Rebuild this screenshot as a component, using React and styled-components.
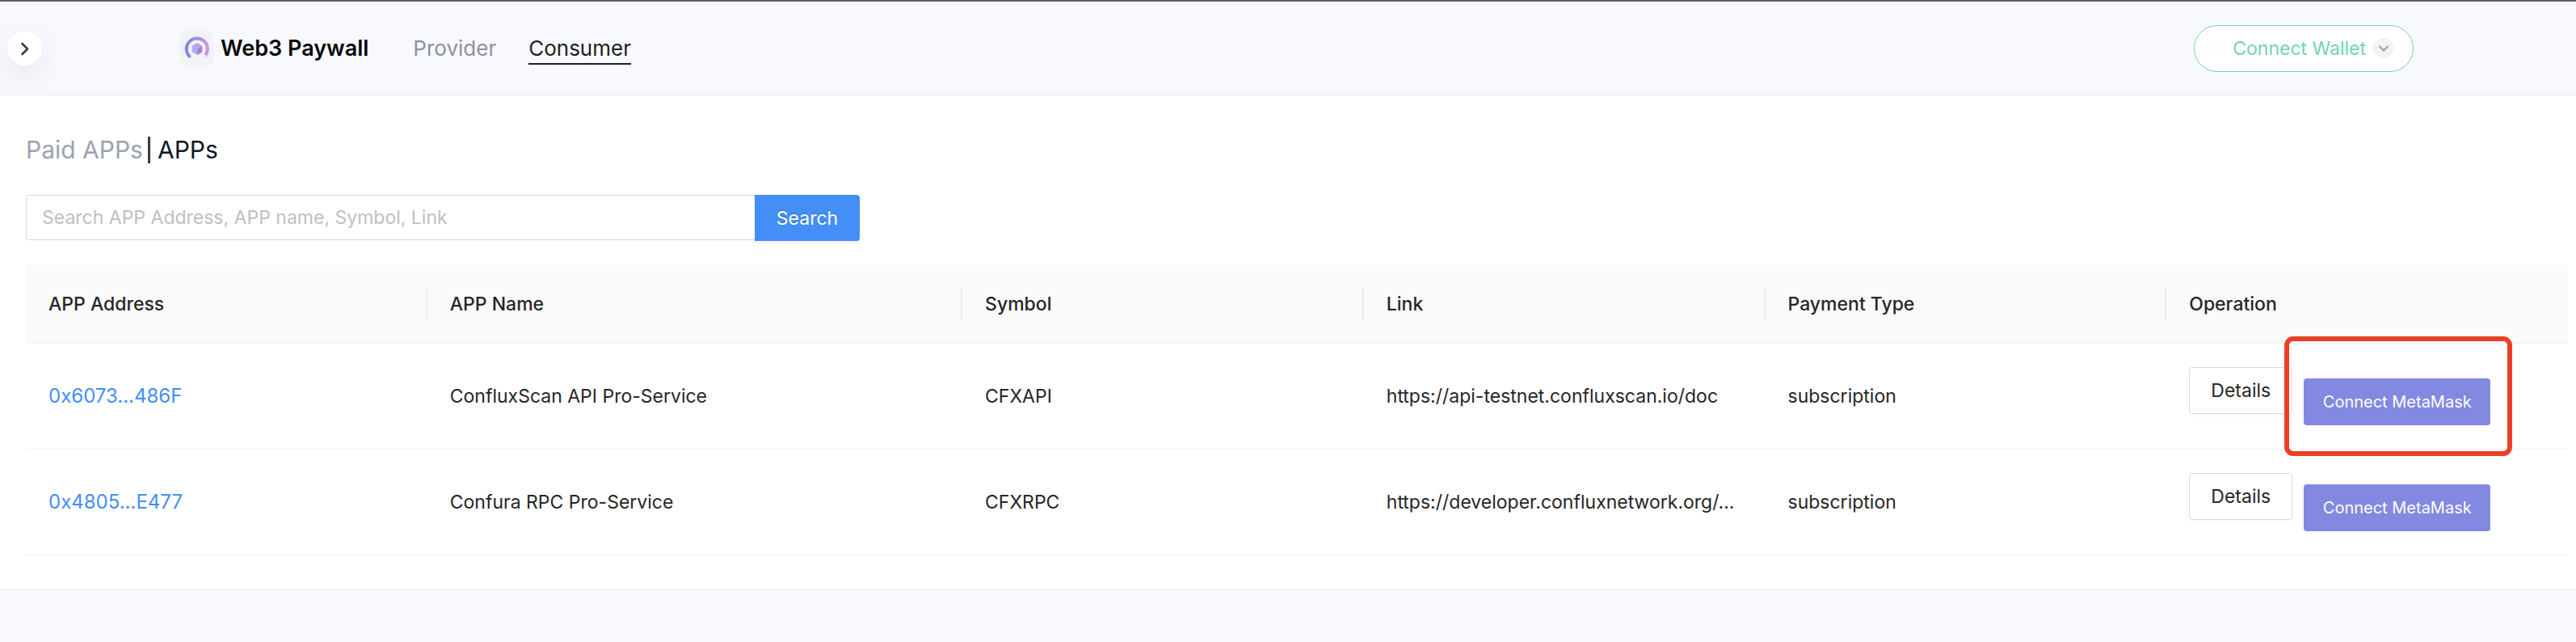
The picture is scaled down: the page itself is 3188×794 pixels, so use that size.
import React from "react";
import styled, { createGlobalStyle } from "styled-components";

const GlobalStyle = createGlobalStyle`
  *, *::before, *::after { box-sizing: border-box; }
  body {
    margin: 0;
    background: #f8f9fe;
    color: #262626;
    font-family: Inter, "Liberation Sans", sans-serif;
    font-size: 23px;
    line-height: 36px;
  }
  button, input { font: inherit; }
  button { cursor: pointer; }
  a { text-decoration: none; }
`;

const Page = styled.div`
  border-top: 2px solid #5f5f64;
`;

const Header = styled.header`
  display: flex;
  align-items: center;
  height: 116px;
  padding-left: 9px;
  border-bottom: 1px solid #ececf0;
`;

const SidebarToggle = styled.button`
  display: grid;
  place-items: center;
  flex: none;
  width: 43px;
  height: 43px;
  padding: 0;
  border: 0;
  border-radius: 50%;
  background: #fff;
  color: #3c3b4b;
  box-shadow: 0 12px 36px rgba(20, 20, 40, 0.08);
`;

const HeaderInner = styled.div`
  display: flex;
  align-items: center;
  flex: 1;
  margin: 0 201px 0 170px;
`;

const Brand = styled.a`
  display: flex;
  align-items: center;
  gap: 8px;
  margin-right: 55px;
  color: #050505;
  font-size: 27px;
  font-weight: 600;
`;

const MainNav = styled.nav`
  display: flex;
  gap: 40px;
  font-size: 26px;
`;

const NavLink = styled.a`
  border-top: 2px solid transparent;
  border-bottom: 2px solid ${(p) => (p.$active ? "#1f1f1f" : "transparent")};
  color: ${(p) => (p.$active ? "#1f1f1f" : "#8f90a0")};
`;

const WalletButton = styled.button`
  display: flex;
  align-items: center;
  height: 58px;
  margin-left: auto;
  padding: 0 24px 0 23px;
  border: 1px solid #6dd3b4;
  border-radius: 29px;
  background: #fff;
  color: #6fd5b5;
`;

const StatusDot = styled.span`
  width: 18px;
  height: 18px;
  margin-right: 6px;
  border-radius: 50%;
  background: #fdfdfd;
`;

const WalletArrow = styled.span`
  display: grid;
  place-items: center;
  width: 25px;
  height: 25px;
  margin-left: 9px;
  border-radius: 50%;
  background: #f3f3f4;
  color: #a2a2a8;
`;

const Content = styled.main`
  padding: 51px 10px 42px 32px;
  border-bottom: 1px solid #ececf0;
  background: #fff;
`;

const Crumbs = styled.nav`
  display: flex;
  margin-bottom: 39px;
  font-size: 30px;
  line-height: 33px;
`;

const CrumbLink = styled.a`
  padding-right: 6px;
  color: #9ca3af;
`;

const CrumbCurrent = styled.span`
  padding-left: 9px;
  border-left: 3px solid #3a3a3a;
  color: #111827;
`;

const SearchForm = styled.form`
  display: flex;
  align-items: flex-start;
  max-width: 1032px;
  margin-bottom: 29px;
`;

const SearchInput = styled.input`
  flex: 1;
  min-width: 0;
  height: 56px;
  padding: 0 19px;
  border: 1px solid #d9d9d9;
  border-right: 0;
  border-radius: 4px 0 0 4px;
  background: #fff;
  color: #262626;
  outline: none;
  &::placeholder { color: #bfbfbf; opacity: 1; }
`;

const SearchButton = styled.button`
  width: 130px;
  height: 57px;
  padding: 0;
  border: 0;
  border-radius: 0 4px 4px 0;
  background: #448ef7;
  color: #fff;
  text-shadow: 0 -2px 0 rgba(0, 0, 0, 0.12);
  box-shadow: 0 4px 0 rgba(0, 0, 0, 0.04);
`;

const AppTable = styled.table`
  width: 100%;
  table-layout: fixed;
  border-collapse: separate;
  border-spacing: 0;
`;

const Col = styled.col`
  width: calc(100% * ${(p) => p.$share} / 19);
`;

const HeadCell = styled.th`
  position: relative;
  height: 98px;
  padding: 0 28px;
  border-bottom: 1px solid #f0f0f0;
  background: #fafafa;
  font-weight: 500;
  text-align: left;
  &:first-child { border-top-left-radius: 4px; }
  &:last-child { border-top-right-radius: 4px; }
  &:not(:last-child)::after {
    content: "";
    position: absolute;
    top: 29px;
    right: 0;
    width: 2px;
    height: 40px;
    background: #ececec;
  }
`;

const Cell = styled.td`
  padding: 29px 28px;
  border-bottom: 1px solid #f0f0f0;
  white-space: nowrap;
`;

const AddressLink = styled.a`
  color: #448ef7;
  font-size: 24px;
`;

const Actions = styled.div`
  display: flex;
  align-items: flex-start;
  gap: 14px;
`;

const DetailsButton = styled.button`
  width: 128px;
  height: 58px;
  padding: 0;
  border: 1px solid #d9d9d9;
  border-radius: 4px;
  background: #fff;
  color: #262626;
  box-shadow: 0 4px 0 rgba(0, 0, 0, 0.016);
`;

const ConnectSlot = styled.div`
  position: relative;
  margin-top: 14px;
`;

const ConnectButton = styled.button`
  display: block;
  width: 231px;
  height: 58px;
  padding: 0;
  border: 0;
  border-radius: 4px;
  background: #8389e1;
  color: #fff;
  font-size: 20px;
`;

const Highlight = styled.div`
  position: absolute;
  z-index: 1;
  inset: -52px -27px -38px -24px;
  border: 6px solid #eb4025;
  border-radius: 11px;
  pointer-events: none;
`;

const columns = [
  { title: "APP Address", share: 3 },
  { title: "APP Name", share: 4 },
  { title: "Symbol", share: 3 },
  { title: "Link", share: 3 },
  { title: "Payment Type", share: 3 },
  { title: "Operation", share: 3 },
];

const apps = [
  {
    address: "0x6073...486F",
    name: "ConfluxScan API Pro-Service",
    symbol: "CFXAPI",
    link: "https://api-testnet.confluxscan.io/doc",
    payment: "subscription",
    highlighted: true,
  },
  {
    address: "0x4805...E477",
    name: "Confura RPC Pro-Service",
    symbol: "CFXRPC",
    link: "https://developer.confluxnetwork.org/...",
    payment: "subscription",
  },
];

function Logo() {
  return (
    <svg width="43" height="43" viewBox="0 0 43 43" aria-hidden="true">
      <defs>
        <linearGradient id="ring" x1="7" y1="0" x2="37" y2="0" gradientUnits="userSpaceOnUse">
          <stop offset="0" stopColor="#7b88e0" />
          <stop offset="0.5" stopColor="#a18fe0" />
          <stop offset="1" stopColor="#cb96e6" />
        </linearGradient>
        <linearGradient id="cubeTop" x1="15" y1="15" x2="28" y2="22" gradientUnits="userSpaceOnUse">
          <stop offset="0" stopColor="#b3a6ea" />
          <stop offset="1" stopColor="#cda0e8" />
        </linearGradient>
      </defs>
      <rect width="43" height="43" rx="10" fill="#f3f2f8" />
      <path
        d="M12.5 31.6A13 13 0 1 1 31.3 31.4"
        fill="none"
        stroke="url(#ring)"
        strokeWidth="4"
        strokeLinecap="round"
      />
      <circle cx="31" cy="31.3" r="1.7" fill="#fff" />
      <path d="M22 15l6.3 3.5L22 22.3l-6.3-3.8z" fill="url(#cubeTop)" />
      <path d="M15.7 18.5l6.3 3.8V30l-6.3-3.6z" fill="#adb0ec" />
      <path d="M28.3 18.5L22 22.3V30l6.3-3.6z" fill="#a184d8" />
    </svg>
  );
}

export default function App() {
  return (
    <Page>
      <GlobalStyle />
      <Header>
        <SidebarToggle type="button" aria-label="Open sidebar">
          <svg width="15" height="20" viewBox="0 0 15 20" fill="none" aria-hidden="true">
            <path d="M4.5 4L11 10.5L4.5 17" stroke="currentColor" strokeWidth="2.6" strokeLinecap="round" strokeLinejoin="round" />
          </svg>
        </SidebarToggle>
        <HeaderInner>
          <Brand href="#home">
            <Logo />
            Web3 Paywall
          </Brand>
          <MainNav aria-label="Main">
            <NavLink href="#provider">Provider</NavLink>
            <NavLink href="#consumer" $active aria-current="page">Consumer</NavLink>
          </MainNav>
          <WalletButton type="button">
            <StatusDot />
            Connect Wallet
            <WalletArrow>
              <svg width="14" height="10" viewBox="0 0 14 10" fill="none" aria-hidden="true">
                <path d="M2 2.5L7 7.5L12 2.5" stroke="currentColor" strokeWidth="2.2" strokeLinecap="round" />
              </svg>
            </WalletArrow>
          </WalletButton>
        </HeaderInner>
      </Header>
      <Content>
        <Crumbs aria-label="Breadcrumb">
          <CrumbLink href="#paid-apps">Paid APPs</CrumbLink>
          <CrumbCurrent aria-current="page">APPs</CrumbCurrent>
        </Crumbs>
        <SearchForm onSubmit={(e) => e.preventDefault()}>
          <SearchInput
            type="text"
            aria-label="Search apps"
            placeholder="Search APP Address, APP name, Symbol, Link"
          />
          <SearchButton type="submit">Search</SearchButton>
        </SearchForm>
        <AppTable>
          <colgroup>
            {columns.map((c) => (
              <Col key={c.title} $share={c.share} />
            ))}
          </colgroup>
          <thead>
            <tr>
              {columns.map((c) => (
                <HeadCell key={c.title} scope="col">{c.title}</HeadCell>
              ))}
            </tr>
          </thead>
          <tbody>
            {apps.map((app) => (
              <tr key={app.address}>
                <Cell><AddressLink href="#app">{app.address}</AddressLink></Cell>
                <Cell>{app.name}</Cell>
                <Cell>{app.symbol}</Cell>
                <Cell>{app.link}</Cell>
                <Cell>{app.payment}</Cell>
                <Cell>
                  <Actions>
                    <DetailsButton type="button">Details</DetailsButton>
                    <ConnectSlot>
                      <ConnectButton type="button">Connect MetaMask</ConnectButton>
                      {app.highlighted && <Highlight />}
                    </ConnectSlot>
                  </Actions>
                </Cell>
              </tr>
            ))}
          </tbody>
        </AppTable>
      </Content>
    </Page>
  );
}
